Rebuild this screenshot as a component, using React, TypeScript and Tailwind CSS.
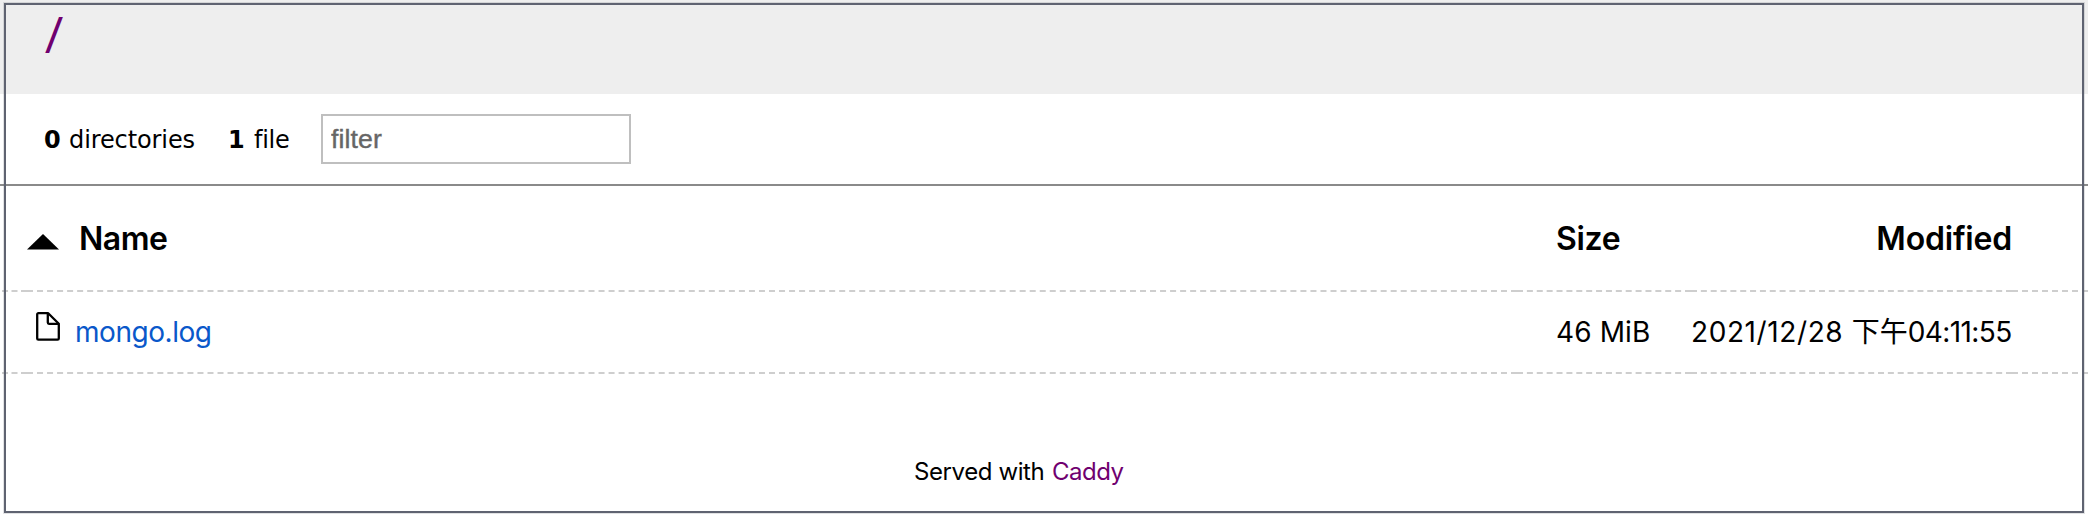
function FileIcon() {
  return (
    <svg width="24" height="29" viewBox="0 0 24 29" fill="none" stroke="#000" strokeWidth="2.3" strokeLinejoin="round" className="block">
      <path d="M2.4 1.2h9.8L22.8 11.8v14.6a1.2 1.2 0 0 1-1.2 1.2H2.4a1.2 1.2 0 0 1-1.2-1.2v-24a1.2 1.2 0 0 1 1.2-1.2Z" />
      <path d="M11.8 1.2v9.4a1.2 1.2 0 0 0 1.2 1.2h9.8" />
    </svg>
  );
}

function SortArrow() {
  return (
    <svg width="32" height="16" viewBox="0 0 32 16" className="block">
      <path d="M16 0 32 15.4H0Z" fill="#000" />
    </svg>
  );
}

const cell = "border-b-2 border-dashed border-[#cecece] p-0 align-middle whitespace-nowrap";

export default function App() {
  return (
    <div className="relative h-[518px] w-[2088px] overflow-hidden bg-white font-['Inter','Noto_Sans_CJK_SC',sans-serif] text-black">
      <header className="h-[94px] bg-[#eeeeee] pt-[8px] pl-[45px]">
        <h1 className="font-['DejaVu_Sans',sans-serif] text-[44px] leading-[51px] text-[#70006f]">
          <a href="#" className="inline-block origin-bottom-left -skew-x-3 scale-x-105">/</a>
        </h1>
      </header>

      <main>
        <div className="flex h-[92px] items-center border-b-2 border-[#8a8a8a] pl-[44px] font-['DejaVu_Sans',sans-serif] text-2xl">
          <span className="flex w-[184px] pt-px">
            <b className="w-[25px]">0</b>
            <span className="tracking-[-0.1px]">directories</span>
          </span>
          <span className="flex w-[93px] pt-px">
            <b className="w-[26px]">1</b>
            <span className="tracking-[-0.3px]">file</span>
          </span>
          <input
            type="text"
            placeholder="filter"
            className="h-[50px] w-[310px] border-2 border-[#bfbfbf] bg-white px-2 font-['Liberation_Sans',sans-serif] text-[26.667px] tracking-[0.1px] [-webkit-text-stroke:0.4px_#666666] placeholder:text-[#666666] placeholder:opacity-100"
          />
        </div>

        <table className="ml-[2px] w-[2086px] table-fixed border-separate border-spacing-0">
          <colgroup>
            <col className="w-[25px]" />
            <col className="w-[1490px]" />
            <col className="w-[174px]" />
            <col className="w-[321px]" />
            <col className="w-[76px]" />
          </colgroup>
          <thead>
            <tr className="h-[106px] text-[32px] leading-10">
              <th className={cell}></th>
              <th className={`${cell} font-semibold`}>
                <span className="flex items-center">
                  <span className="w-[52px] pt-[8px]"><SortArrow /></span>
                  <span className="pt-[2px] tracking-[-0.5px]">Name</span>
                </span>
              </th>
              <th className={`${cell} pt-[2px]! pl-[39px]! text-left font-semibold tracking-[-0.3px]`}>Size</th>
              <th className={`${cell} pt-[2px]! text-right font-semibold tracking-[-0.2px]`}>Modified</th>
              <th className={cell}></th>
            </tr>
          </thead>
          <tbody>
            <tr className="h-[82px] text-[28px] leading-10">
              <td className={cell}></td>
              <td className={cell}>
                <span className="flex items-center pl-[9px]">
                  <span className="w-[39px] pb-[11px]"><FileIcon /></span>
                  <a href="#" className="tracking-[-0.45px] text-[#0a58ca]">mongo.log</a>
                </span>
              </td>
              <td className={`${cell} pl-[39px]! tracking-[0.1px]`}>46 MiB</td>
              <td className={`${cell} pr-[2px]! text-right`}>
                <span className="tracking-[0.6px]">2021/12/28 </span>
                <span>下午</span>
                <span className="tracking-[-0.6px]">04:11:55</span>
              </td>
              <td className={cell}></td>
            </tr>
          </tbody>
        </table>
      </main>

      <footer className="mt-[82px] ml-[914px] flex text-2xl leading-8">
        <span className="w-[138px] tracking-[-0.4px]">Served with</span>
        <a href="#" className="tracking-[-0.5px] text-[#70006f]">Caddy</a>
      </footer>

      <div className="pointer-events-none absolute top-[3px] left-[4px] h-[510px] w-[2080px] border-2 border-[#5f6371] shadow-[0_0_0_1px_#5f637130]" />
    </div>
  );
}
